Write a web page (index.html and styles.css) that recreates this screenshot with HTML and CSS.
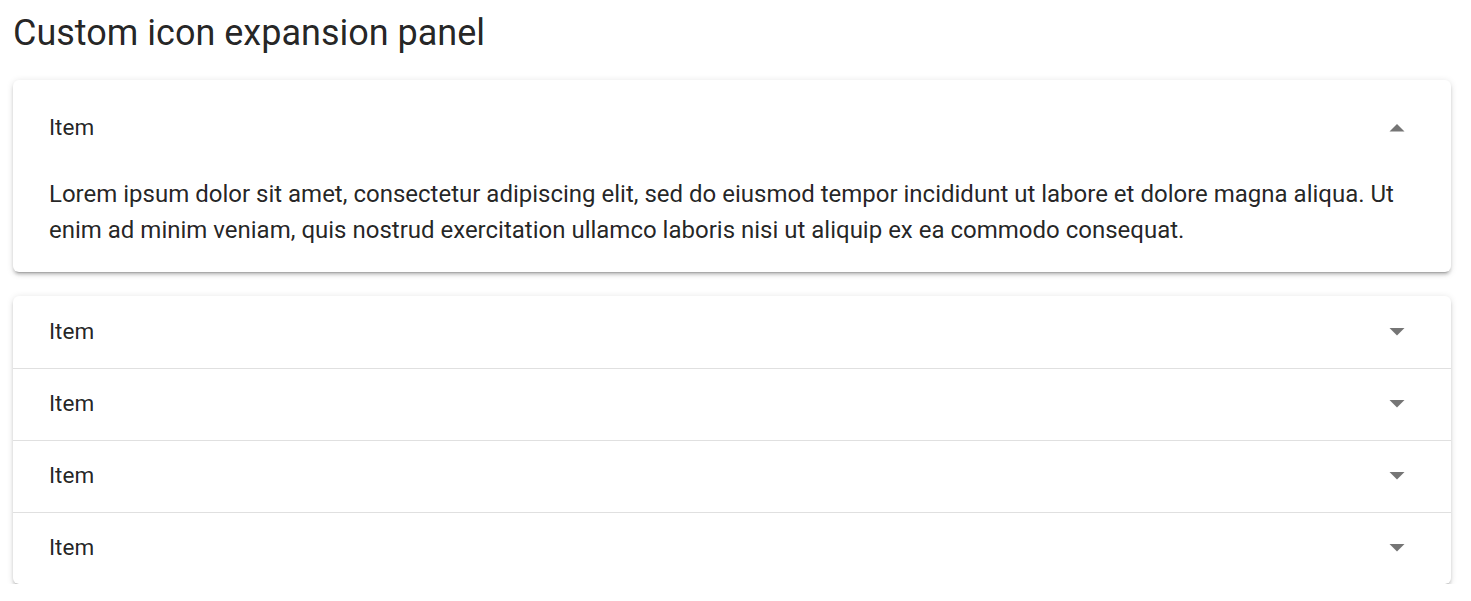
FILE: index.html
```html
<!DOCTYPE html>
<html lang="en">
<head>
<meta charset="utf-8">
<title>Custom icon expansion panel</title>
<link rel="stylesheet" href="styles.css">
</head>
<body>
<div class="page">
  <h1 class="title">Custom icon expansion panel</h1>

  <div class="panels">
    <div class="panel active">
      <div class="panel-header">
        <span class="label">Item</span>
        <svg class="icon" viewBox="0 0 24 24"><path d="M7 15l5-5 5 5z"/></svg>
      </div>
      <div class="panel-content">
        Lorem ipsum dolor sit amet, consectetur adipiscing elit, sed do eiusmod tempor incididunt ut labore et dolore magna aliqua. Ut enim ad minim veniam, quis nostrud exercitation ullamco laboris nisi ut aliquip ex ea commodo consequat.
      </div>
    </div>
  </div>

  <div class="panels">
    <div class="panel">
      <div class="panel-header">
        <span class="label">Item</span>
        <svg class="icon" viewBox="0 0 24 24"><path d="M7 10l5 5 5-5z"/></svg>
      </div>
    </div>
    <div class="panel">
      <div class="panel-header">
        <span class="label">Item</span>
        <svg class="icon" viewBox="0 0 24 24"><path d="M7 10l5 5 5-5z"/></svg>
      </div>
    </div>
    <div class="panel">
      <div class="panel-header">
        <span class="label">Item</span>
        <svg class="icon" viewBox="0 0 24 24"><path d="M7 10l5 5 5-5z"/></svg>
      </div>
    </div>
    <div class="panel">
      <div class="panel-header">
        <span class="label">Item</span>
        <svg class="icon" viewBox="0 0 24 24"><path d="M7 10l5 5 5-5z"/></svg>
      </div>
    </div>
  </div>
</div>
</body>
</html>
```

FILE: styles.css
```css
html, body {
  margin: 0;
  padding: 0;
  background: #ffffff;
}

body {
  font-family: Roboto, "Liberation Sans", Arial, sans-serif;
  color: rgba(0, 0, 0, 0.87);
}

.page {
  padding: 13px 20px 0 13px;
  display: flex;
  flex-direction: column;
  gap: 24px;
}

.title {
  margin: 0 0 3px 0;
  font-size: 36px;
  line-height: 40px;
  font-weight: 400;
}

.panels {
  display: flex;
  flex-direction: column;
  border-radius: 6px;
  background: #fff;
  box-shadow: 0 4px 1.5px -3px rgba(0, 0, 0, 0.2),
              0 3px 3px 0 rgba(0, 0, 0, 0.14),
              0 1.5px 7.5px 0 rgba(0, 0, 0, 0.12);
}

.panel {
  position: relative;
}

.panel + .panel::before {
  content: "";
  position: absolute;
  left: 0;
  right: 0;
  top: 0;
  border-top: 1px solid rgba(0, 0, 0, 0.12);
}

.panel-header {
  box-sizing: border-box;
  display: flex;
  align-items: center;
  justify-content: space-between;
  min-height: 72px;
  padding: 0 36px 2px;
  font-size: 22.5px;
  line-height: 1;
}

.panel.active .panel-header {
  min-height: 96px;
}

.icon {
  width: 36px;
  height: 36px;
  fill: rgba(0, 0, 0, 0.54);
  flex: none;
}

.panel-content {
  padding: 0 36px 24px;
  font-size: 24px;
  line-height: 36px;
}
```
